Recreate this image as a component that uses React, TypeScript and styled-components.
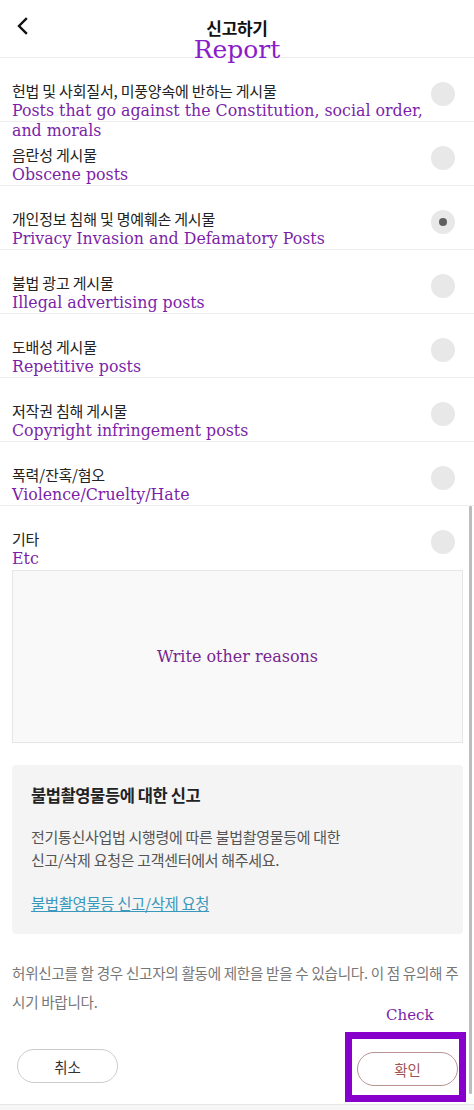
import { useState } from 'react';
import styled, { createGlobalStyle } from 'styled-components';

const reasons = [
	{ ko: '헌법 및 사회질서, 미풍양속에 반하는 게시물', en: 'Posts that go against the Constitution, social order, and morals' },
	{ ko: '음란성 게시물', en: 'Obscene posts' },
	{ ko: '개인정보 침해 및 명예훼손 게시물', en: 'Privacy Invasion and Defamatory Posts' },
	{ ko: '불법 광고 게시물', en: 'Illegal advertising posts' },
	{ ko: '도배성 게시물', en: 'Repetitive posts' },
	{ ko: '저작권 침해 게시물', en: 'Copyright infringement posts' },
	{ ko: '폭력/잔혹/혐오', en: 'Violence/Cruelty/Hate' },
	{ ko: '기타', en: 'Etc' }
];

const GlobalStyle = createGlobalStyle`
	* {
		box-sizing: border-box;
	}
	body {
		margin: 0;
		background: #ffffff;
		font-family: 'Noto Sans CJK KR', 'Noto Sans', sans-serif;
	}
`;

function App() {
	const [selected, setSelected] = useState<number>(2);

	return (
		<Page>
			<GlobalStyle />
			<Header>
				<BackButton aria-label="back">
					<svg width="14" height="18" viewBox="0 0 14 18">
						<path d="M10 2 L3 9 L10 16" fill="none" stroke="#111" strokeWidth="2.4" strokeLinecap="square" />
					</svg>
				</BackButton>
				<TitleBlock>
					<Title>신고하기</Title>
					<TitleEn>Report</TitleEn>
				</TitleBlock>
			</Header>

			<ReasonList>
				{reasons.map((reason, index) => (
					<ReasonRow key={index} $last={index === reasons.length - 1} onClick={() => setSelected(index)}>
						<ReasonText>
							<ReasonKo>{reason.ko}</ReasonKo>
							<ReasonEn>{reason.en}</ReasonEn>
						</ReasonText>
						<Radio $checked={selected === index} />
					</ReasonRow>
				))}
			</ReasonList>

			<OtherBox>
				<Placeholder>Write other reasons</Placeholder>
			</OtherBox>

			<InfoBox>
				<InfoTitle>불법촬영물등에 대한 신고</InfoTitle>
				<InfoBody>
					전기통신사업법 시행령에 따른 불법촬영물등에 대한
					<br />
					신고/삭제 요청은 고객센터에서 해주세요.
				</InfoBody>
				<InfoLink href="#">불법촬영물등 신고/삭제 요청</InfoLink>
			</InfoBox>

			<Notice>허위신고를 할 경우 신고자의 활동에 제한을 받을 수 있습니다. 이 점 유의해 주시기 바랍니다.</Notice>

			<Footer>
				<PillButton>취소</PillButton>
				<Highlight>
					<HighlightLabel>Check</HighlightLabel>
					<PillButton $primary>확인</PillButton>
				</Highlight>
			</Footer>
			<BottomBar />
			<ScrollThumb />
		</Page>
	);
}

const Page = styled.div`
	width: 474px;
	min-height: 1110px;
	position: relative;
	overflow: hidden;
	background: #ffffff;
`;

const Header = styled.div`
	height: 58px;
	display: grid;
	grid-template-columns: 48px 1fr 48px;
	border-bottom: 1px solid #eeeeee;
`;

const BackButton = styled.div`
	display: flex;
	justify-content: center;
	padding-top: 17px;
	padding-right: 2px;
`;

const TitleBlock = styled.div`
	display: flex;
	flex-direction: column;
	align-items: center;
	padding-top: 18px;
`;

const Title = styled.div`
	font-size: 17px;
	font-weight: 700;
	line-height: 19px;
	color: #111111;
	letter-spacing: -0.3px;
`;

const TitleEn = styled.div`
	font-family: 'DejaVu Serif', 'Liberation Serif', serif;
	font-size: 25px;
	line-height: 23px;
	color: #8a1cc9;
	margin-top: 1px;
`;

const ReasonList = styled.div`
	display: flex;
	flex-direction: column;
`;

const ReasonRow = styled.div<{ $last?: boolean }>`
	height: 64px;
	display: flex;
	align-items: flex-start;
	justify-content: space-between;
	padding: 23px 19px 0 12px;
	border-bottom: ${({ $last }) => ($last ? 'none' : '1px solid #eeeeee')};
	cursor: pointer;
`;

const ReasonText = styled.div`
	display: flex;
	flex-direction: column;
	max-width: 428px;
`;

const ReasonKo = styled.div`
	font-size: 15px;
	line-height: 20px;
	color: #222222;
	letter-spacing: -0.2px;
`;

const ReasonEn = styled.div`
	font-family: 'DejaVu Serif', 'Liberation Serif', serif;
	font-size: 15.8px;
	line-height: 20px;
	color: #7b1fa8;
	position: relative;
	z-index: 1;
`;

const Radio = styled.div<{ $checked?: boolean }>`
	width: 24px;
	height: 24px;
	margin-top: 1px;
	border-radius: 50%;
	background: #e8e8e8;
	flex-shrink: 0;
	display: flex;
	align-items: center;
	justify-content: center;

	&::after {
		content: '';
		width: 8px;
		height: 8px;
		border-radius: 50%;
		background: #5f5f5f;
		display: ${({ $checked }) => ($checked ? 'block' : 'none')};
	}
`;

const OtherBox = styled.div`
	margin: 0 11px 0 12px;
	height: 173px;
	background: #f9f9fa;
	border: 1px solid #e6e6e6;
	display: flex;
	align-items: center;
	justify-content: center;
`;

const Placeholder = styled.div`
	font-family: 'DejaVu Serif', 'Liberation Serif', serif;
	font-size: 16px;
	color: #77258f;
`;

const InfoBox = styled.div`
	margin: 22px 11px 0 12px;
	padding: 19px 19px 19px 19px;
	background: #f4f4f4;
	border-radius: 4px;
`;

const InfoTitle = styled.div`
	font-size: 16.5px;
	font-weight: 700;
	line-height: 22px;
	color: #222222;
	letter-spacing: -0.4px;
`;

const InfoBody = styled.div`
	margin-top: 19px;
	font-size: 15px;
	line-height: 23px;
	color: #555555;
	letter-spacing: -0.3px;
`;

const InfoLink = styled.a`
	display: block;
	margin-top: 20px;
	font-size: 15.5px;
	line-height: 24px;
	color: #3a98bd;
	text-decoration: underline;
	letter-spacing: -0.4px;
`;

const Notice = styled.div`
	margin: 24px 14px 0 12px;
	font-size: 14.6px;
	line-height: 29px;
	color: #777777;
	letter-spacing: -0.3px;
`;

const Footer = styled.div`
	height: 88px;
	display: flex;
	align-items: center;
	justify-content: space-between;
	padding: 12px 8px 0 17px;
`;

const PillButton = styled.button<{ $primary?: boolean }>`
	width: 101px;
	height: 34px;
	border-radius: 17px;
	background: #ffffff;
	border: 1px solid ${({ $primary }) => ($primary ? '#b89391' : '#cccccc')};
	color: ${({ $primary }) => ($primary ? '#9c5457' : '#333333')};
	font-family: 'Noto Sans CJK KR', 'Noto Sans', sans-serif;
	font-size: 14.5px;
	cursor: pointer;
`;

const Highlight = styled.div`
	position: relative;
	border: 7px solid #8800cc;
	padding: 13px 0 10px 5px;
	width: 121px;
	height: 70px;
	margin-top: 2px;
`;

const HighlightLabel = styled.div`
	position: absolute;
	top: -34px;
	left: 34px;
	font-family: 'DejaVu Serif', 'Liberation Serif', serif;
	font-size: 15px;
	line-height: 20px;
	color: #7b1fa8;
`;

const BottomBar = styled.div`
	height: 8px;
	border-top: 1px solid #e6e6e6;
	background: #f6f6f6;
`;

const ScrollThumb = styled.div`
	position: absolute;
	top: 506px;
	right: 2px;
	width: 3px;
	height: 588px;
	background: #bdbdbd;
	border-radius: 1px;
`;

export default App;
